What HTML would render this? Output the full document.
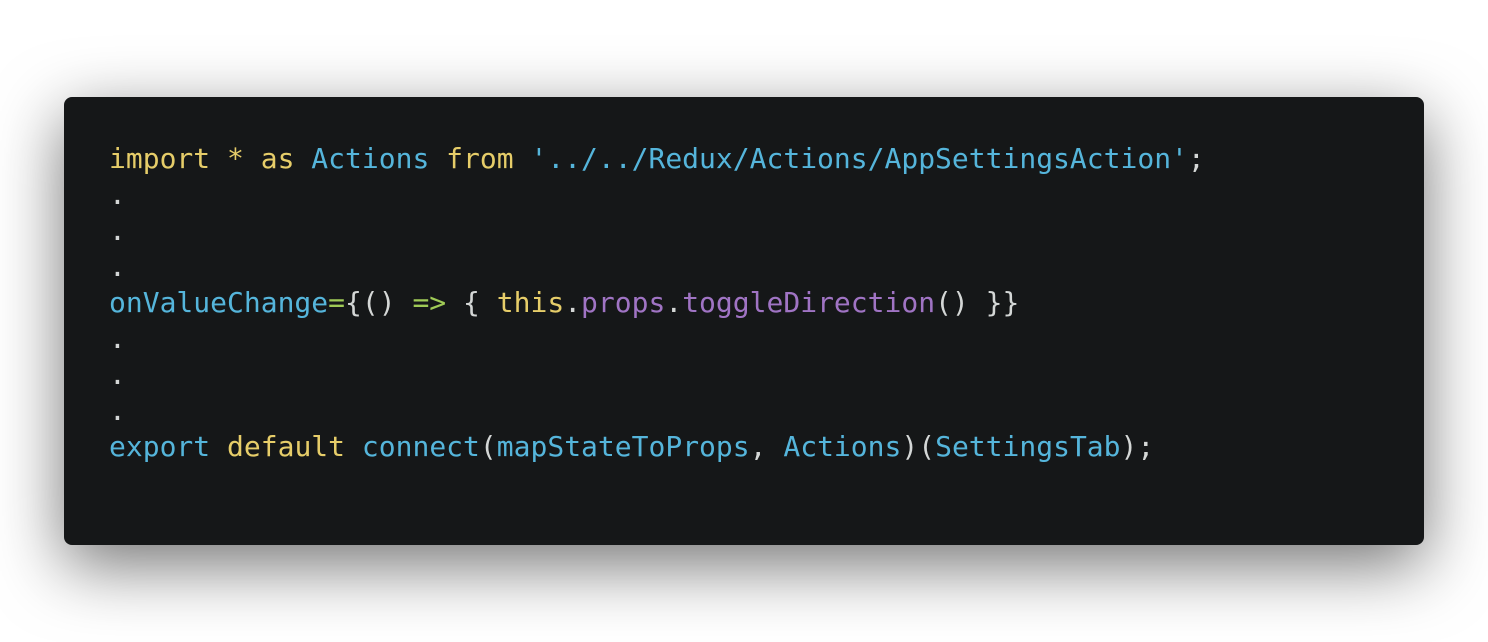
<!DOCTYPE html>
<html><head><style>
body{margin:0;width:1488px;height:642px;background:#fff;overflow:hidden;}
.box{position:absolute;left:64px;top:97px;width:1360px;height:448px;background:#151718;border-radius:8px;box-shadow:0 20px 68px rgba(0,0,0,0.55);}
pre{position:absolute;left:45px;top:44px;margin:0;font-family:"DejaVu Sans Mono","Liberation Mono",monospace;font-size:28px;line-height:36px;color:#d4d7d6;}
.y{color:#e6cd69}.b{color:#55b5db}.p{color:#a074c4}.g{color:#9fca56}
</style></head><body>
<div class="box"><pre><span class="y">import * as</span> <span class="b">Actions</span> <span class="y">from</span> <span class="b">'../../Redux/Actions/AppSettingsAction'</span>;
.
.
.
<span class="b">onValueChange</span><span class="g">=</span>{() <span class="g">=&gt;</span> { <span class="y">this</span>.<span class="p">props</span>.<span class="p">toggleDirection</span>() }}
.
.
.
<span class="b">export</span> <span class="y">default</span> <span class="b">connect</span>(<span class="b">mapStateToProps</span>, <span class="b">Actions</span>)(<span class="b">SettingsTab</span>);</pre></div>
</body></html>
